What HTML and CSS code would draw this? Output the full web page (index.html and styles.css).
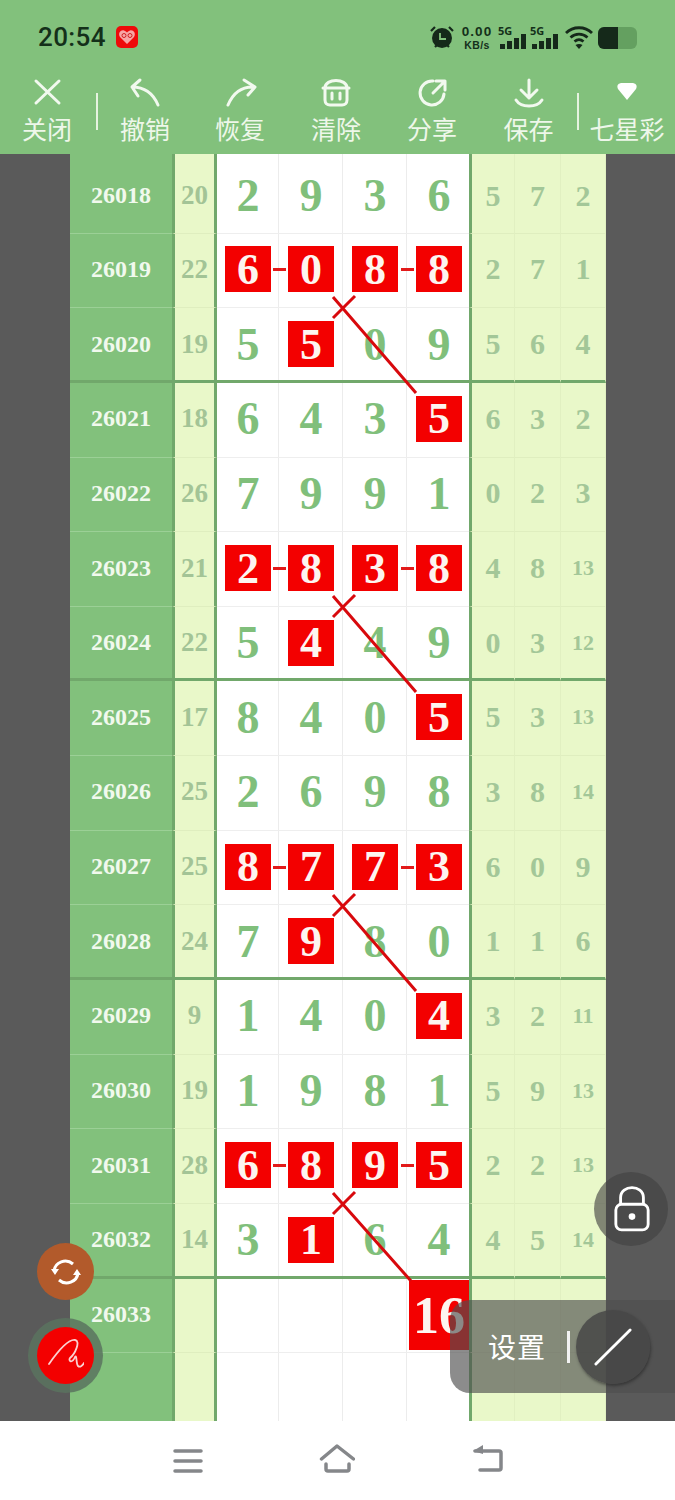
FILE: index.html
```html
<!DOCTYPE html>
<html lang="zh">
<head>
<meta charset="utf-8">
<title>七星彩</title>
<link rel="stylesheet" href="styles.css">
</head>
<body>
<div class="page">
  <header class="status">
    <div class="status-left">
      <span class="time">20:54</span>
      <svg class="app-badge" viewBox="0 0 22 22"><rect width="22" height="22" rx="5" fill="#ee0a0a"/><path d="M11 18 4 11C1.500 7 5 3.500 8 4.500 9.500 5 10.500 6 11 6.500 11.500 6 12.500 5 14 4.500 17 3.500 20.500 7 18 11Z" fill="#f7a5a5"/><circle cx="8" cy="9.500" r="2" fill="none" stroke="#d02020"/><circle cx="14" cy="9.500" r="2" fill="none" stroke="#d02020"/></svg>
    </div>
    <div class="status-right">
      <svg class="alarm" viewBox="0 0 24 24"><circle cx="12" cy="13" r="10" fill="#15291a"/><path d="M1 6 5 2M23 6 19 2M5 22l2-2M19 22l-2-2" stroke="#15291a" stroke-width="2.200" fill="none"/><path d="M10 8v6h6" stroke="#82c17c" stroke-width="1.800" fill="none"/></svg>
      <div class="speed"><span class="speed-num">0.00</span><span class="speed-unit">KB/s</span></div>
      <div class="signal"><span class="net">5G</span><svg class="bars" viewBox="0 0 26 15"><path d="M0 10h5v5H0zM7 7h5v8H7zM14 4h5v11h-5zM21 0h5v15h-5z" fill="#15291a"/></svg></div>
      <div class="signal"><span class="net">5G</span><svg class="bars" viewBox="0 0 26 15"><path d="M0 10h5v5H0zM7 7h5v8H7zM14 4h5v11h-5zM21 0h5v15h-5z" fill="#15291a"/></svg></div>
      <svg class="wifi" viewBox="0 0 28 24"><path d="M1 8C8 1 20 1 27 8M5.500 12.500C10.500 8 17.500 8 22.500 12.500M9.500 16.500C12.500 14 15.500 14 18.500 16.500" stroke="#15291a" stroke-width="2.800" fill="none"/><path d="M14 24 10.500 20C12.500 18.500 15.500 18.500 17.500 20Z" fill="#15291a"/></svg>
      <div class="battery"><span class="battery-level"></span></div>
    </div>
  </header>

  <nav class="toolbar">
    <div class="tool"><svg class="tool-icon" viewBox="0 0 36 36"><path d="M7 5 30 27M30 5 7 27"/></svg><span class="tool-label">关闭</span></div>
    <span class="tool-sep"></span>
    <div class="tool"><svg class="tool-icon" viewBox="0 0 36 36"><path d="M13 4 5 11 11 20M5 11C18 11 26 17 31 29"/></svg><span class="tool-label">撤销</span></div>
    <div class="tool"><svg class="tool-icon" viewBox="0 0 36 36"><path d="M22 4 33 11 26 19M33 11C20 10 11 17 6 29"/></svg><span class="tool-label">恢复</span></div>
    <div class="tool"><svg class="tool-icon" viewBox="0 0 36 36"><path d="M7 12C7 2 29 2 29 12M5 12H31M7 12V24C7 27 9 29 12 29H24C27 29 29 27 29 24V12M14 17V23M22 17V23"/></svg><span class="tool-label">清除</span></div>
    <div class="tool"><svg class="tool-icon" viewBox="0 0 36 36"><path d="M19 5A12 12 0 1 0 30 18M19 17 31 5M22 5H31V14"/></svg><span class="tool-label">分享</span></div>
    <div class="tool"><svg class="tool-icon" viewBox="0 0 36 36"><path d="M18 4V22M10 14 18 22 26 14M5 24C10 32 26 32 31 24"/></svg><span class="tool-label">保存</span></div>
    <span class="tool-sep"></span>
    <div class="tool"><svg class="tool-icon" viewBox="0 0 36 36"><path class="solid" d="M9 13C7 9 10 7 13 7H23C26 7 29 9 27 13L18 24Z"/></svg><span class="tool-label">七星彩</span></div>
  </nav>

  <main class="board">
    <div class="row top"><div class="c per">26018</div><div class="c sum">20</div><div class="c d">2</div><div class="c d">9</div><div class="c d">3</div><div class="c d">6</div><div class="c e first">5</div><div class="c e">7</div><div class="c e">2</div></div>
    <div class="row"><div class="c per">26019</div><div class="c sum">22</div><div class="c d link"><b class="hit">6</b></div><div class="c d"><b class="hit">0</b></div><div class="c d link"><b class="hit">8</b></div><div class="c d"><b class="hit">8</b></div><div class="c e first">2</div><div class="c e">7</div><div class="c e">1</div></div>
    <div class="row thick"><div class="c per">26020</div><div class="c sum">19</div><div class="c d">5</div><div class="c d"><b class="hit">5</b></div><div class="c d">0</div><div class="c d">9</div><div class="c e first">5</div><div class="c e">6</div><div class="c e">4</div></div>
    <div class="row"><div class="c per">26021</div><div class="c sum">18</div><div class="c d">6</div><div class="c d">4</div><div class="c d">3</div><div class="c d"><b class="hit">5</b></div><div class="c e first">6</div><div class="c e">3</div><div class="c e">2</div></div>
    <div class="row"><div class="c per">26022</div><div class="c sum">26</div><div class="c d">7</div><div class="c d">9</div><div class="c d">9</div><div class="c d">1</div><div class="c e first">0</div><div class="c e">2</div><div class="c e">3</div></div>
    <div class="row"><div class="c per">26023</div><div class="c sum">21</div><div class="c d link"><b class="hit">2</b></div><div class="c d"><b class="hit">8</b></div><div class="c d link"><b class="hit">3</b></div><div class="c d"><b class="hit">8</b></div><div class="c e first">4</div><div class="c e">8</div><div class="c e small">13</div></div>
    <div class="row thick"><div class="c per">26024</div><div class="c sum">22</div><div class="c d">5</div><div class="c d"><b class="hit">4</b></div><div class="c d">4</div><div class="c d">9</div><div class="c e first">0</div><div class="c e">3</div><div class="c e small">12</div></div>
    <div class="row"><div class="c per">26025</div><div class="c sum">17</div><div class="c d">8</div><div class="c d">4</div><div class="c d">0</div><div class="c d"><b class="hit">5</b></div><div class="c e first">5</div><div class="c e">3</div><div class="c e small">13</div></div>
    <div class="row"><div class="c per">26026</div><div class="c sum">25</div><div class="c d">2</div><div class="c d">6</div><div class="c d">9</div><div class="c d">8</div><div class="c e first">3</div><div class="c e">8</div><div class="c e small">14</div></div>
    <div class="row"><div class="c per">26027</div><div class="c sum">25</div><div class="c d link"><b class="hit">8</b></div><div class="c d"><b class="hit">7</b></div><div class="c d link"><b class="hit">7</b></div><div class="c d"><b class="hit">3</b></div><div class="c e first">6</div><div class="c e">0</div><div class="c e">9</div></div>
    <div class="row thick"><div class="c per">26028</div><div class="c sum">24</div><div class="c d">7</div><div class="c d"><b class="hit">9</b></div><div class="c d">8</div><div class="c d">0</div><div class="c e first">1</div><div class="c e">1</div><div class="c e">6</div></div>
    <div class="row"><div class="c per">26029</div><div class="c sum">9</div><div class="c d">1</div><div class="c d">4</div><div class="c d">0</div><div class="c d"><b class="hit">4</b></div><div class="c e first">3</div><div class="c e">2</div><div class="c e small">11</div></div>
    <div class="row"><div class="c per">26030</div><div class="c sum">19</div><div class="c d">1</div><div class="c d">9</div><div class="c d">8</div><div class="c d">1</div><div class="c e first">5</div><div class="c e">9</div><div class="c e small">13</div></div>
    <div class="row"><div class="c per">26031</div><div class="c sum">28</div><div class="c d link"><b class="hit">6</b></div><div class="c d"><b class="hit">8</b></div><div class="c d link"><b class="hit">9</b></div><div class="c d"><b class="hit">5</b></div><div class="c e first">2</div><div class="c e">2</div><div class="c e small">13</div></div>
    <div class="row thick"><div class="c per">26032</div><div class="c sum">14</div><div class="c d">3</div><div class="c d"><b class="hit">1</b></div><div class="c d">6</div><div class="c d">4</div><div class="c e first">4</div><div class="c e">5</div><div class="c e small">14</div></div>
    <div class="row"><div class="c per">26033</div><div class="c sum"></div><div class="c d"></div><div class="c d"></div><div class="c d"></div><div class="c d"><b class="hit total">16</b></div><div class="c e first"></div><div class="c e"></div><div class="c e"></div></div>
    <div class="row last"><div class="c per"></div><div class="c sum"></div><div class="c d"></div><div class="c d"></div><div class="c d"></div><div class="c d"></div><div class="c e first"></div><div class="c e"></div><div class="c e"></div></div>
    <svg class="draw" viewBox="0 0 675 1267">
      <path d="M333 143 416 239M355 142 333 164M333 442 416 538M355 441 333 463M333 741 416 837M355 740 333 762M333 1039 411 1127M355 1038 333 1060"/>
    </svg>
  </main>

  <footer class="navbar">
    <svg class="nav-icon" viewBox="0 0 36 32"><path d="M6 8H32M6 18H32M6 28H32"/></svg>
    <svg class="nav-icon" viewBox="0 0 36 32"><path d="M2.500 16 18 3 34.500 16M7 21V26Q7 28 9 28H28Q30 28 30 26V21"/></svg>
    <svg class="nav-icon" viewBox="0 0 36 32"><path class="solid" d="M14 2 4 8 14 11Z"/><path d="M6 8H30Q32 8 32 10V25Q32 27 30 27H11"/></svg>
  </footer>

  <div class="fab lock"><svg class="lock-icon" viewBox="0 0 40 50"><rect x="3" y="20" width="34" height="27" rx="6"/><path d="M8 20V13C8-1 32-1 32 13V20"/><circle class="solid" cx="20" cy="33" r="3.500"/></svg></div>
  <div class="settings">
    <span class="settings-label">设置</span>
    <span class="settings-sep"></span>
    <div class="pen"><svg class="pen-icon" viewBox="0 0 40 40"><path d="M2 38 38 2"/></svg></div>
  </div>
  <div class="fab sync"><svg class="sync-icon" viewBox="0 0 32 32"><path d="M4 15C5 6 16 2 23 8M28 17C27 26 16 30 9 24"/><path class="solid" d="M1 13H9L5 19ZM31 19H23L27 13Z"/></svg></div>
  <div class="fab sign"><div class="sign-dot"><svg class="sign-icon" viewBox="0 0 36 36"><path d="M1 26C8 16 20 1 27 2 33 3 27 16 22 20 20 23 24 26 27 19 29 16 28 26 30 28 32 30 35 27 36 25"/></svg></div></div>
</div>
</body>
</html>
```
FILE: styles.css
```css
* { box-sizing: border-box; }
html, body { margin: 0; padding: 0; }
body { width: 675px; height: 1500px; overflow: hidden; background: #fff; font-family: "Noto Sans CJK SC", "Noto Sans", sans-serif; }
.page { position: relative; width: 675px; height: 1500px; overflow: hidden; }

.status { height: 70px; background: #82c17c; display: flex; justify-content: space-between; align-items: flex-start; padding: 25px 38px 0; color: #14301a; }
.status-left { display: flex; align-items: center; gap: 10px; height: 24px; }
.time { font: 500 26px/24px Roboto, sans-serif; letter-spacing: .4px; width: 68px; white-space: nowrap; }
.app-badge { width: 22px; height: 22px; display: block; }
.status-right { display: flex; align-items: flex-start; }
.alarm { width: 24px; height: 24px; display: block; margin-right: 8px; }
.speed { display: flex; flex-direction: column; align-items: center; width: 30px; margin: -1px 8px 0 0; font-family: "Liberation Sans", sans-serif; font-weight: 700; }
.speed-num { font-size: 13.500px; line-height: 15px; letter-spacing: 1px; }
.speed-unit { font-size: 10.500px; line-height: 13px; letter-spacing: .4px; }
.signal { position: relative; width: 26px; height: 24px; margin-right: 6px; }
.net { position: absolute; left: -2px; top: 1px; font: 700 11px/10px "Noto Sans", sans-serif; }
.bars { position: absolute; left: 0; bottom: 0; width: 26px; height: 15px; display: block; }
.wifi { width: 28px; height: 24px; display: block; margin: 0 5px 0 1px; }
.battery { width: 39px; height: 22px; border-radius: 6px; background: #64a060; overflow: hidden; margin-top: 2px; }
.battery-level { display: block; width: 20px; height: 22px; background: #15291a; }

.toolbar { height: 84px; background: #82c17c; display: grid; grid-template-columns: 96px 2px 94px 96px 96px 96px 97px 2px 96px; align-items: start; padding-top: 6px; color: #eef7ea; }
.tool { display: flex; flex-direction: column; align-items: center; }
.tool:first-child { padding-right: 2px; }
.tool-icon { width: 36px; height: 36px; display: block; fill: none; stroke: #f2f9ef; stroke-width: 3; stroke-linecap: round; stroke-linejoin: round; }
.tool-icon .solid { fill: #fff; stroke: none; }
.tool-label { font-size: 25px; line-height: 36px; margin-top: -2px; font-weight: 400; white-space: nowrap; }
.tool-sep { width: 2px; height: 37px; margin-top: 17px; background: #e6f3e0; }

.board { position: relative; height: 1267px; background: #5a5a5a; padding: 0 69px 0 70px; display: flex; flex-direction: column; }
.row { display: grid; grid-template-columns: 102px 45px 62px 64px 64px 62px 46px 46px 45px; grid-template-rows: minmax(0, 1fr); height: 74.650px; flex: none; }
.row.top { height: 79.650px; }
.row.top .c { padding-top: 7px; }
.row.last { flex: 1; }
.row.last .c { border-bottom: 0; }
.c { display: flex; align-items: center; justify-content: center; border-bottom: 1px solid #eee; padding-bottom: 2px; font-family: "Liberation Serif", serif; font-weight: 700; position: relative; }
.per { background: #82c17c; color: #f1f9ee; font-size: 24px; border-bottom-color: #9bd096; }
.sum { background: #e9f8c9; color: #a3c496; font-size: 27px; border-left: 3px solid #71a86b; border-right: 3px solid #71a86b; border-bottom-color: #dfeebf; }
.d { background: #fff; color: #80bf7b; font-size: 46px; box-shadow: inset -1px 0 #ececec; }
.e { background: #e9f8c9; color: #a3c798; font-size: 30px; border-right: 1px solid #e1f0c1; border-bottom-color: #dfeebf; }
.e.first { border-left: 3px solid #71a86b; }
.e.small { font-size: 22px; }
.d:nth-child(6) { box-shadow: none; padding-left: 2px; }
.thick .c { border-bottom: 3px solid #71a86b; padding-bottom: 0; }
.hit { width: 46px; height: 46px; background: #f30000; color: #fdf5f0; display: flex; align-items: center; justify-content: center; font-size: 44px; font-weight: 700; }
.link::after { content: ""; position: absolute; right: -7px; top: 50%; margin-top: -2px; width: 13px; height: 3px; background: #e21a1a; z-index: 1; }
.total { width: 60px; height: 70px; font-size: 52px; margin-bottom: -2px; }
.draw { position: absolute; left: 0; top: 0; width: 675px; height: 1267px; pointer-events: none; }
.draw path { fill: none; stroke: #d8090d; stroke-width: 3; }

.navbar { height: 79px; background: #fff; display: flex; align-items: flex-start; padding: 22px 0 0 169px; gap: 114px; }
.nav-icon { width: 36px; height: 32px; display: block; fill: none; stroke: #85878a; stroke-width: 3.500; stroke-linecap: round; stroke-linejoin: round; }
.nav-icon .solid { fill: #85878a; stroke: none; }

.fab { position: absolute; border-radius: 50%; display: flex; align-items: center; justify-content: center; }
.lock { left: 594px; top: 1172px; width: 74px; height: 74px; background: rgba(64, 64, 64, .62); }
.lock-icon { width: 38px; height: 48px; display: block; margin-left: 2px; fill: none; stroke: #fff; stroke-width: 3; }
.lock-icon .solid { fill: #fff; stroke: none; }
.settings { position: absolute; left: 450px; top: 1300px; width: 225px; height: 93px; border-radius: 20px 0 0 20px; background: rgba(78, 78, 78, .65); display: flex; align-items: center; padding-left: 38px; color: #fff; }
.settings-label { font-size: 28px; line-height: 34px; margin-top: -2px; font-weight: 400; letter-spacing: 1px; white-space: nowrap; }
.settings-sep { width: 3px; height: 32px; margin-left: 21px; background: #f1f1f1; }
.pen { width: 74px; height: 74px; border-radius: 50%; margin-left: 6px; background: rgba(70, 70, 70, .85); box-shadow: 1px 2px 3px rgba(30, 30, 30, .5); display: flex; align-items: center; justify-content: center; }
.pen-icon { width: 38px; height: 38px; display: block; fill: none; stroke: #fff; stroke-width: 3; stroke-linecap: round; }
.sync { left: 37px; top: 1243px; width: 57px; height: 57px; background: #b25a2b; }
.sync-icon { width: 32px; height: 32px; display: block; fill: none; stroke: #fff; stroke-width: 3; }
.sync-icon .solid { fill: #fff; stroke: none; }
.sign { left: 28px; top: 1318px; width: 75px; height: 75px; background: rgba(90, 115, 95, .85); }
.sign-dot { width: 57px; height: 57px; border-radius: 50%; background: #f30000; display: flex; align-items: center; justify-content: center; }
.sign-icon { width: 36px; height: 36px; display: block; fill: none; stroke: #fbd0d0; stroke-width: 1.800; stroke-linecap: round; stroke-linejoin: round; }
```
